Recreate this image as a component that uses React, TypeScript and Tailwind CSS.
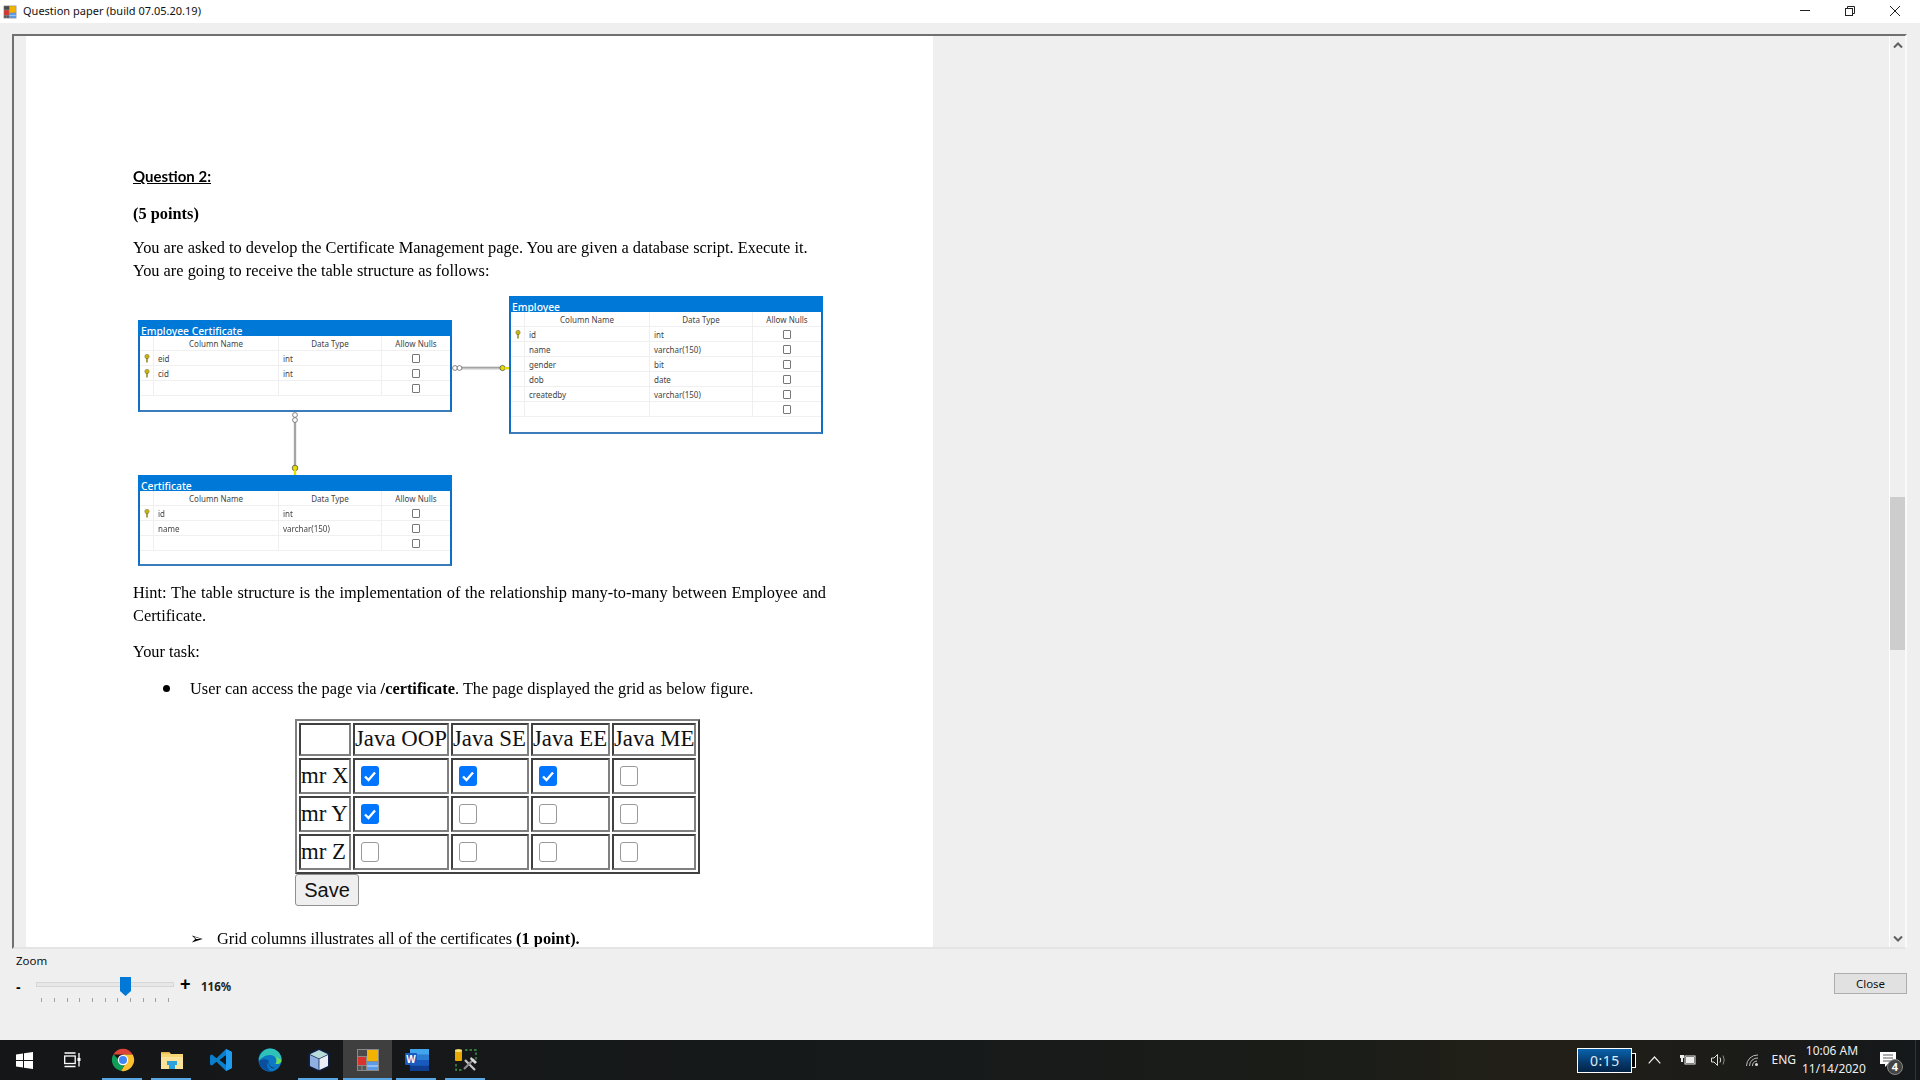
import { ReactNode } from "react";

const serif = "font-['Liberation_Serif',serif]";
const ui = "font-['Noto_Sans',sans-serif]";

function AppIcon({ size = 24 }: { size?: number }) {
  return (
    <svg width={size} height={size} viewBox="0 0 24 24">
      <rect x="1" y="1" width="22" height="22" fill="#8a8a8a" />
      <rect x="2" y="2" width="9" height="6" fill="#4a4a4a" />
      <rect x="11" y="2" width="11" height="11" fill="#f2b200" />
      <rect x="2" y="9" width="8" height="8" fill="#d9342b" />
      <rect x="2" y="18" width="3.5" height="4" fill="#555" />
      <rect x="6.5" y="18" width="3.5" height="4" fill="#555" />
      <rect x="11" y="14" width="11" height="8" fill="#5b9bea" />
      <rect x="11" y="17.5" width="11" height="1" fill="#cfe2fa" />
    </svg>
  );
}

function KeyIcon({ className = "" }: { className?: string }) {
  return (
    <svg width="6" height="9" viewBox="0 0 6 9" className={className}>
      <circle cx="3" cy="2.5" r="2.2" fill="#c9b400" stroke="#777" strokeWidth="0.5" />
      <rect x="2.3" y="4" width="1.4" height="4.5" fill="#8c7d00" />
    </svg>
  );
}

function ErRow({ k, name, type }: { k?: boolean; name?: string; type?: string }) {
  return (
    <div className="flex h-[15px] border-b border-[#f0f0f0] text-[8px] leading-[15px] text-[#444]">
      <div className="w-[14px] border-r border-[#efefef] flex items-center justify-center">{k && <KeyIcon />}</div>
      <div className="w-[125px] border-r border-[#efefef] pl-1">{name}</div>
      <div className="w-[103px] border-r border-[#efefef] pl-1">{type}</div>
      <div className="flex-1 flex items-center justify-center">
        <div className="w-2 h-[9px] border border-[#777] bg-white rounded-[1px]" />
      </div>
    </div>
  );
}

function ErTable({ title, rows, className }: { title: string; rows: { k?: boolean; name?: string; type?: string }[]; className: string }) {
  return (
    <div className={`absolute w-[314px] bg-white border-2 border-[#0f6fc6] border-b-[#3b7cbb] border-t-0 ${ui} ${className}`}>
      <div className="h-4 -mx-0.5 bg-[#0078d7] text-white text-[10.3px] leading-[22px] font-medium pl-[3px]">{title}</div>
      <div className="flex h-[15px] border-b border-[#f0f0f0] text-[8px] leading-[16px] text-[#444]">
        <div className="w-[14px] border-r border-[#efefef]" />
        <div className="w-[125px] border-r border-[#efefef] text-center">Column Name</div>
        <div className="w-[103px] border-r border-[#efefef] text-center">Data Type</div>
        <div className="flex-1 text-center">Allow Nulls</div>
      </div>
      {rows.map((r, i) => (
        <ErRow key={i} {...r} />
      ))}
    </div>
  );
}

function Diagram() {
  return (
    <div className="relative h-[270px] mt-[14px] blur-[0.3px]">
      <ErTable
        title="Employee Certificate"
        className="left-[5px] top-6 h-[92px]"
        rows={[{ k: true, name: "eid", type: "int" }, { k: true, name: "cid", type: "int" }, {}]}
      />
      <ErTable
        title="Employee"
        className="left-[376px] top-0 h-[138px]"
        rows={[
          { k: true, name: "id", type: "int" },
          { name: "name", type: "varchar(150)" },
          { name: "gender", type: "bit" },
          { name: "dob", type: "date" },
          { name: "createdby", type: "varchar(150)" },
          {},
        ]}
      />
      <ErTable
        title="Certificate"
        className="left-[5px] top-[179px] h-[91px]"
        rows={[{ k: true, name: "id", type: "int" }, { name: "name", type: "varchar(150)" }, {}]}
      />
      <svg className="absolute inset-0 pointer-events-none" width="400" height="200">
        <line x1="326" y1="72" x2="368" y2="72" stroke="#c4c4c4" strokeWidth="3" />
        <line x1="326" y1="71.5" x2="368" y2="71.5" stroke="#a4a4a4" strokeWidth="1" />
        <circle cx="322" cy="72" r="2.4" fill="white" stroke="#666" strokeWidth="0.8" />
        <circle cx="326.5" cy="72" r="2.4" fill="white" stroke="#666" strokeWidth="0.8" />
        <circle cx="369.5" cy="72" r="2.6" fill="#e6dc00" stroke="#555" strokeWidth="0.8" />
        <rect x="371.5" y="71" width="4.5" height="2.4" fill="#e6dc00" />
        <line x1="162" y1="126" x2="162" y2="172" stroke="#c0c0c0" strokeWidth="2.5" />
        <line x1="162" y1="126" x2="162" y2="172" stroke="#8a8a8a" strokeWidth="1" />
        <circle cx="162" cy="119" r="2.4" fill="white" stroke="#666" strokeWidth="0.8" />
        <circle cx="162" cy="124" r="2.4" fill="white" stroke="#666" strokeWidth="0.8" />
        <circle cx="162" cy="172" r="2.8" fill="#e6dc00" stroke="#555" strokeWidth="0.8" />
        <rect x="160.8" y="174" width="2.4" height="5" fill="#e6dc00" />
      </svg>
    </div>
  );
}

function Check({ on }: { on: boolean }) {
  return on ? (
    <span className="block w-[18px] h-5 rounded-[3px] bg-[#0075ff]">
      <svg viewBox="0 0 18 20" className="w-[18px] h-5">
        <path d="M4 10.5 L7.5 14 L14 6.5" fill="none" stroke="white" strokeWidth="2.4" />
      </svg>
    </span>
  ) : (
    <span className="block w-[18px] h-5 rounded-[3px] bg-white border border-[#9a9a9a]" />
  );
}

function Cell({ w, children, className = "" }: { w: string; children?: ReactNode; className?: string }) {
  return (
    <td className={`${w} h-9 p-0 border-2 border-t-[#404040] border-l-[#404040] border-r-[#808080] border-b-[#808080] ${className}`}>
      {children}
    </td>
  );
}

function Grid() {
  const rows: [string, boolean[]][] = [
    ["mr X", [true, true, true, false]],
    ["mr Y", [true, false, false, false]],
    ["mr Z", [false, false, false, false]],
  ];
  const widths = ["w-[96px]", "w-[78px]", "w-[79px]", "w-[84px]"];
  return (
    <table className={`ml-[162px] mt-[19px] border-separate [border-spacing:2px] border-2 border-t-[#808080] border-l-[#808080] border-r-[#404040] border-b-[#404040] text-[22.8px] leading-none text-[#111] table-fixed w-[405px] ${serif}`}>
      <tbody>
        <tr>
          <Cell w="w-[52px]" className="!h-[33px]" />
          {["Java OOP", "Java SE", "Java EE", "Java ME"].map((h, i) => (
            <Cell key={h} w={widths[i]} className="!h-[33px] whitespace-nowrap">
              {h}
            </Cell>
          ))}
        </tr>
        {rows.map(([name, checks]) => (
          <tr key={name}>
            <Cell w="w-[52px]" className="whitespace-nowrap">{name}</Cell>
            {checks.map((c, i) => (
              <Cell key={i} w={widths[i]} className="pl-1.5">
                <Check on={c} />
              </Cell>
            ))}
          </tr>
        ))}
      </tbody>
    </table>
  );
}

function Page() {
  return (
    <div className={`w-[907px] bg-white overflow-hidden pl-[107px] pt-[129px] text-[16.35px] leading-[23px] text-black ${serif}`}>
      <div className="blur-[0.3px]">
        <p className="font-['Lato',sans-serif] font-bold underline text-[15px]">Question 2:</p>
        <p className="mt-[14px] font-bold">(5 points)</p>
        <p className="mt-[11px]">
          You are asked to develop the Certificate Management page. You are given a database script. Execute it.
          <br />
          You are going to receive the table structure as follows:
        </p>
      </div>
      <Diagram />
      <div className="blur-[0.3px]">
        <p className="mt-[15px] w-[693px] text-justify">
          Hint: The table structure is the implementation of the relationship many-to-many between Employee and Certificate.
        </p>
        <p className="mt-[13px]">Your task:</p>
        <div className="mt-[14px] flex items-center">
          <span className="block w-[7px] h-[7px] rounded-full bg-black ml-[30px] mr-[20px]" />
          <span>
            User can access the page via <b>/certificate</b>. The page displayed the grid as below figure.
          </span>
        </div>
      </div>
      <Grid />
      <button className="block ml-[162px] w-[64px] h-8 rounded-[3px] bg-[#efefef] border border-[#8f8f8f] text-[20px] text-[#111] font-['Liberation_Sans',sans-serif]">
        Save
      </button>
      <div className="mt-[21px] flex blur-[0.3px]">
        <span className="w-[84px] pl-[57px] font-['DejaVu_Sans',sans-serif] text-[16px]">➢</span>
        <span>
          Grid columns illustrates all of the certificates <b>(1 point).</b>
        </span>
      </div>
    </div>
  );
}

function Scrollbar() {
  return (
    <div className="w-4 ml-auto border-l border-white flex flex-col items-center relative">
      <svg width="10" height="7" viewBox="0 0 10 7" className="mt-[6px]">
        <path d="M1 5.5 L5 1.5 L9 5.5" fill="none" stroke="#606060" strokeWidth="2" />
      </svg>
      <div className="absolute left-0 top-[461px] w-[15px] h-[153px] bg-[#cdcdcd]" />
      <svg width="10" height="7" viewBox="0 0 10 7" className="mt-auto mb-[5px]">
        <path d="M1 1.5 L5 5.5 L9 1.5" fill="none" stroke="#606060" strokeWidth="2" />
      </svg>
    </div>
  );
}

function ZoomBar() {
  const ticks = [41, 54, 67, 79, 92, 105, 117, 130, 143, 155, 168];
  return (
    <div className="h-[91px] flex items-start px-3 relative">
      <div className="w-[220px]">
        <p className={`${ui} text-[11.5px] leading-4 mt-1 ml-1 text-[#111]`}>Zoom</p>
        <div className="relative h-8 mt-2">
          <span className="absolute left-[4px] top-0 text-[14px] font-bold leading-5 font-['Liberation_Sans',sans-serif]">-</span>
          <div className="absolute left-6 top-[5px] w-[138px] h-[5px] bg-[#e7e7e7] border border-[#d6d6d6]" />
          <svg className="absolute left-[108px] top-0" width="11" height="20" viewBox="0 0 11 20">
            <path d="M0 0 H11 V14 L5.5 19 L0 14 Z" fill="#0078d7" />
          </svg>
          {ticks.map((t) => (
            <span key={t} className="absolute top-[21px] w-px h-[4px] bg-[#a0a0a0]" style={{ left: t - 12 }} />
          ))}
          <span className="absolute left-[168px] -top-[3px] text-[18px] font-bold leading-5 font-['Liberation_Sans',sans-serif]">+</span>
          <span className={`absolute left-[189px] top-0 text-[11.5px] leading-5 font-bold text-[#222] ${ui}`}>116%</span>
        </div>
      </div>
      <button className={`ml-auto mt-6 mr-[1px] w-[73px] h-[21px] bg-[#e1e1e1] border border-[#adadad] text-[11.5px] text-[#111] ${ui}`}>
        Close
      </button>
    </div>
  );
}

function TaskItem({ children, open, active }: { children: ReactNode; open?: boolean; active?: boolean }) {
  return (
    <div className={`w-[49px] h-10 flex items-center justify-center relative ${active ? "bg-[#3f3f3f]" : ""}`}>
      {children}
      {open && <span className={`absolute bottom-0 h-0.5 bg-[#5aa7e6] ${active ? "inset-x-0" : "left-1 right-[5px]"}`} />}
    </div>
  );
}

function Chrome() {
  return (
    <svg width="24" height="24" viewBox="0 0 24 24">
      <path d="M2.4 6.5 A11 11 0 0 1 21.6 6.5 H12 Z" fill="#db4437" />
      <path d="M2.4 6.3 A11.2 11.2 0 0 0 10.2 23 L15 14 L8 12 Z" fill="#0f9d58" />
      <path d="M21.7 6.5 A11.2 11.2 0 0 1 10.2 23 L16.5 12 L12 6.5 Z" fill="#fbc02d" />
      <circle cx="12" cy="12" r="5.2" fill="white" />
      <circle cx="12" cy="12" r="4" fill="#4285f4" />
    </svg>
  );
}

function Folder() {
  return (
    <svg width="24" height="24" viewBox="0 0 24 24">
      <path d="M1 4 H9 L11 6 H23 V21 H1 Z" fill="#f7d774" />
      <path d="M1 4 H9 L10 5.5 H1 Z" fill="#e3b341" />
      <path d="M1 9 H23 V21 H1 Z" fill="#fbe29a" />
      <path d="M7 13 H17 V17 H15 V21 H9 V17 H7 Z" fill="#2aa3dc" />
    </svg>
  );
}

function VsCode() {
  return (
    <svg width="24" height="24" viewBox="0 0 24 24">
      <path d="M17 1 L23 4 V20 L17 23 L7.5 13.8 L3 17.5 L1 16.4 V7.6 L3 6.5 L7.5 10.2 Z M17 7 L10.5 12 L17 17 Z" fill="#0a7fcc" fillRule="evenodd" />
      <path d="M17 1 L23 4 V20 L17 23 Z" fill="#1f9cf0" />
    </svg>
  );
}

function Edge() {
  return (
    <svg width="24" height="24" viewBox="0 0 24 24">
      <circle cx="12" cy="12" r="11.5" fill="#0c77c4" />
      <path d="M12 .5 A11.5 11.5 0 0 1 23.5 12 C23.5 15.5 20 16.5 17.5 16 C20 13 18 7 12 7 C7 7 3 10 1 13 C1 6 6 .5 12 .5 Z" fill="#2fc3b8" />
      <path d="M23.4 12 C23.5 15.5 20 16.5 17.5 16 C19 14 19 11 18 9 Z" fill="#6fdc5c" />
      <path d="M1 13 C1.5 19 7 23.5 13 23.5 C9 21 8 16 11 13 C9 11 4 10.5 1 13 Z" fill="#0a4f9e" />
      <path d="M11 13 C10 17 13 20 17 20 C14 21 11 19 10.5 15 Z" fill="#12233f" />
    </svg>
  );
}

function Cube() {
  return (
    <svg width="24" height="24" viewBox="0 0 24 24">
      <path d="M12 .5 L22.5 5.5 V18.5 L12 23.5 L1.5 18.5 V5.5 Z" fill="#10204d" />
      <path d="M12 2 L21 6.2 L12 10.5 L3 6.2 Z" fill="#b8dcd9" />
      <path d="M3 7 L11.6 11 V22 L3 18 Z" fill="#8fb0e0" />
      <path d="M12.4 11 L21 7 V18 L12.4 22 Z" fill="#e9eef5" />
    </svg>
  );
}

function Word() {
  return (
    <svg width="24" height="24" viewBox="0 0 24 24">
      <rect x="5" y="1" width="19" height="22" rx="1" fill="#2b7cd3" />
      <rect x="5" y="1" width="19" height="5.5" fill="#41a5ee" />
      <rect x="5" y="12" width="19" height="5.5" fill="#185abd" />
      <rect x="5" y="17.5" width="19" height="5.5" fill="#103f91" />
      <rect x="0" y="5" width="12" height="12" rx="1" fill="#185abd" />
      <text x="6" y="14.5" textAnchor="middle" fontSize="10" fontWeight="700" fill="white" fontFamily="Liberation Sans">W</text>
    </svg>
  );
}

function Tools() {
  return (
    <svg width="24" height="24" viewBox="0 0 24 24">
      <rect x="1" y="2" width="7" height="11" rx="1" fill="#e8a800" />
      <ellipse cx="4.5" cy="2.5" rx="3.5" ry="1.5" fill="#f8dd6a" />
      <path d="M11 2 H22 V13" fill="none" stroke="#3f9a4a" strokeWidth="1.4" strokeDasharray="2.5 2" />
      <path d="M2 16 V22 H8" fill="none" stroke="#3f9a4a" strokeWidth="1.4" strokeDasharray="2.5 2" />
      <path d="M11 12 L21 22" stroke="#c8c8c8" strokeWidth="2.2" />
      <path d="M20 11 L10 21" stroke="#8d8d8d" strokeWidth="2.2" />
      <path d="M17 9 L23 14 L21 16 L16 11 Z" fill="#dcdcdc" />
    </svg>
  );
}

function Taskbar() {
  return (
    <div className={`h-10 flex items-center text-white bg-[linear-gradient(90deg,#141618_0%,#171a1a_50%,#1b1d18_70%,#221f17_80%,#15181a_100%)] ${ui}`}>
      <div className="w-12 flex justify-center">
        <svg width="17" height="17" viewBox="0 0 17 17" fill="white">
          <path d="M0 2.4 L7 1.4 V8 H0 Z M8 1.2 L17 0 V8 H8 Z M0 9 H7 V15.6 L0 14.6 Z M8 9 H17 V17 L8 15.8 Z" />
        </svg>
      </div>
      <div className="w-[48px] flex justify-center">
        <svg width="17" height="16" viewBox="0 0 17 16" fill="none" stroke="white" strokeWidth="1.3">
          <rect x=".7" y="4" width="10.5" height="7.5" />
          <path d="M.5 1 H11.5 M.5 14.5 H11.5 M15 1 V14.5" />
          <rect x="13.5" y="6" width="3" height="3" fill="white" stroke="none" />
        </svg>
      </div>
      <div className="flex ml-[2px]">
        <TaskItem open><Chrome /></TaskItem>
        <TaskItem open><Folder /></TaskItem>
        <TaskItem><VsCode /></TaskItem>
        <TaskItem><Edge /></TaskItem>
        <TaskItem open><Cube /></TaskItem>
        <TaskItem open active><AppIcon /></TaskItem>
        <TaskItem open><Word /></TaskItem>
        <TaskItem open><Tools /></TaskItem>
      </div>
      <div className="ml-auto flex items-center h-full relative">
        <div className="flex items-center mr-3">
          <div className="w-[55px] h-[25px] border border-white bg-[linear-gradient(180deg,#0a63ad,#06386a_60%,#032347)] text-[14px] text-[#dcebf7] text-center leading-[23px] tracking-[0.5px]">0:15</div>
          <div className="w-1 h-[15px] bg-black border-y border-r border-white" />
        </div>
        <svg width="13" height="8" viewBox="0 0 13 8" fill="none" stroke="#eee" strokeWidth="1.2" className="mr-[19px]">
          <path d="M.7 7.3 L6.5 1 L12.3 7.3" />
        </svg>
        <svg width="16" height="10" viewBox="0 0 16 10" className="mr-[15px]">
          <rect x="5" y="1" width="10" height="8" fill="none" stroke="#eee" />
          <rect x="6" y="2" width="8" height="6" fill="#eee" />
          <path d="M0 0 H4 V3 H3 V7 H1 V3 H0 Z" fill="#eee" />
        </svg>
        <svg width="16" height="14" viewBox="0 0 16 14" fill="none" stroke="#ddd" strokeWidth="1" className="mr-[19px]">
          <path d="M.5 5 H3 L6.5 1.5 V12.5 L3 9 H.5 Z" />
          <path d="M9 4.5 Q10.5 7 9 9.5" />
          <path d="M12 2.5 Q14.5 7 12 11.5" stroke="#888" />
        </svg>
        <svg width="13" height="13" viewBox="0 0 13 13" fill="none" stroke="#bbb" strokeWidth="1" className="mr-3">
          <path d="M.5 12 A11 11 0 0 1 12 1" />
          <path d="M3.5 12 A8 8 0 0 1 12 4" />
          <path d="M6.5 12 A5 5 0 0 1 11 7" />
          <circle cx="10.5" cy="10.5" r="1.5" fill="#ddd" stroke="none" />
        </svg>
        <span className="text-[12px] text-[#eee] mr-1.5">ENG</span>
        <div className="w-[60px] text-[12px] text-center leading-[18px] text-[#eee] mr-[18px] whitespace-nowrap">
          <div>10:06 AM</div>
          <div>11/14/2020</div>
        </div>
        <div className="relative w-[32px] h-full mr-[3px]">
          <svg width="17" height="16" viewBox="0 0 17 16" className="absolute left-0 top-[12px]">
            <path d="M0 0 H16 V12 H8 L5 15 V12 H0 Z" fill="white" />
            <path d="M3 3 H13 M3 6 H13 M3 9 H13" stroke="#333" strokeWidth="0.8" />
          </svg>
          <span className="absolute left-[7px] top-[19px] w-4 h-4 rounded-full bg-[#444] border border-[#888] text-[11px] leading-[14px] text-center font-bold">4</span>
        </div>
        <div className="w-px h-full bg-[#333] mr-[4px]" />
      </div>
    </div>
  );
}

export default function App() {
  return (
    <div className="w-[1920px] h-screen overflow-hidden flex flex-col bg-[#efefef]">
      <div className={`h-[23px] bg-white flex items-center pl-[3px] relative ${ui}`}>
        <AppIcon size={14} />
        <span className="ml-[6px] text-[11px] text-[#111]">Question paper (build 07.05.20.19)</span>
        <div className="ml-auto flex items-center gap-[35px] mr-[20px] -mt-[2px]">
          <svg width="10" height="2" viewBox="0 0 10 2"><rect width="10" height="1" fill="#222" /></svg>
          <svg width="10" height="10" viewBox="0 0 10 10" fill="none" stroke="#222">
            <rect x=".5" y="2.5" width="7" height="7" />
            <path d="M2.5 2.5 V.5 H9.5 V7.5 H7.5" />
          </svg>
          <svg width="10" height="10" viewBox="0 0 10 10" stroke="#222"><path d="M0 0 L10 10 M10 0 L0 10" /></svg>
        </div>
      </div>
      <div className="h-[926px] pt-[11px] pl-3 pr-[13px]">
        <div className="h-[915px] flex border-2 border-t-[#707070] border-l-[#707070] border-r-[#fafafa] border-b-[#e4e4e4]">
          <div className="w-3 shrink-0" />
          <Page />
          <Scrollbar />
        </div>
      </div>
      <ZoomBar />
      <Taskbar />
    </div>
  );
}
